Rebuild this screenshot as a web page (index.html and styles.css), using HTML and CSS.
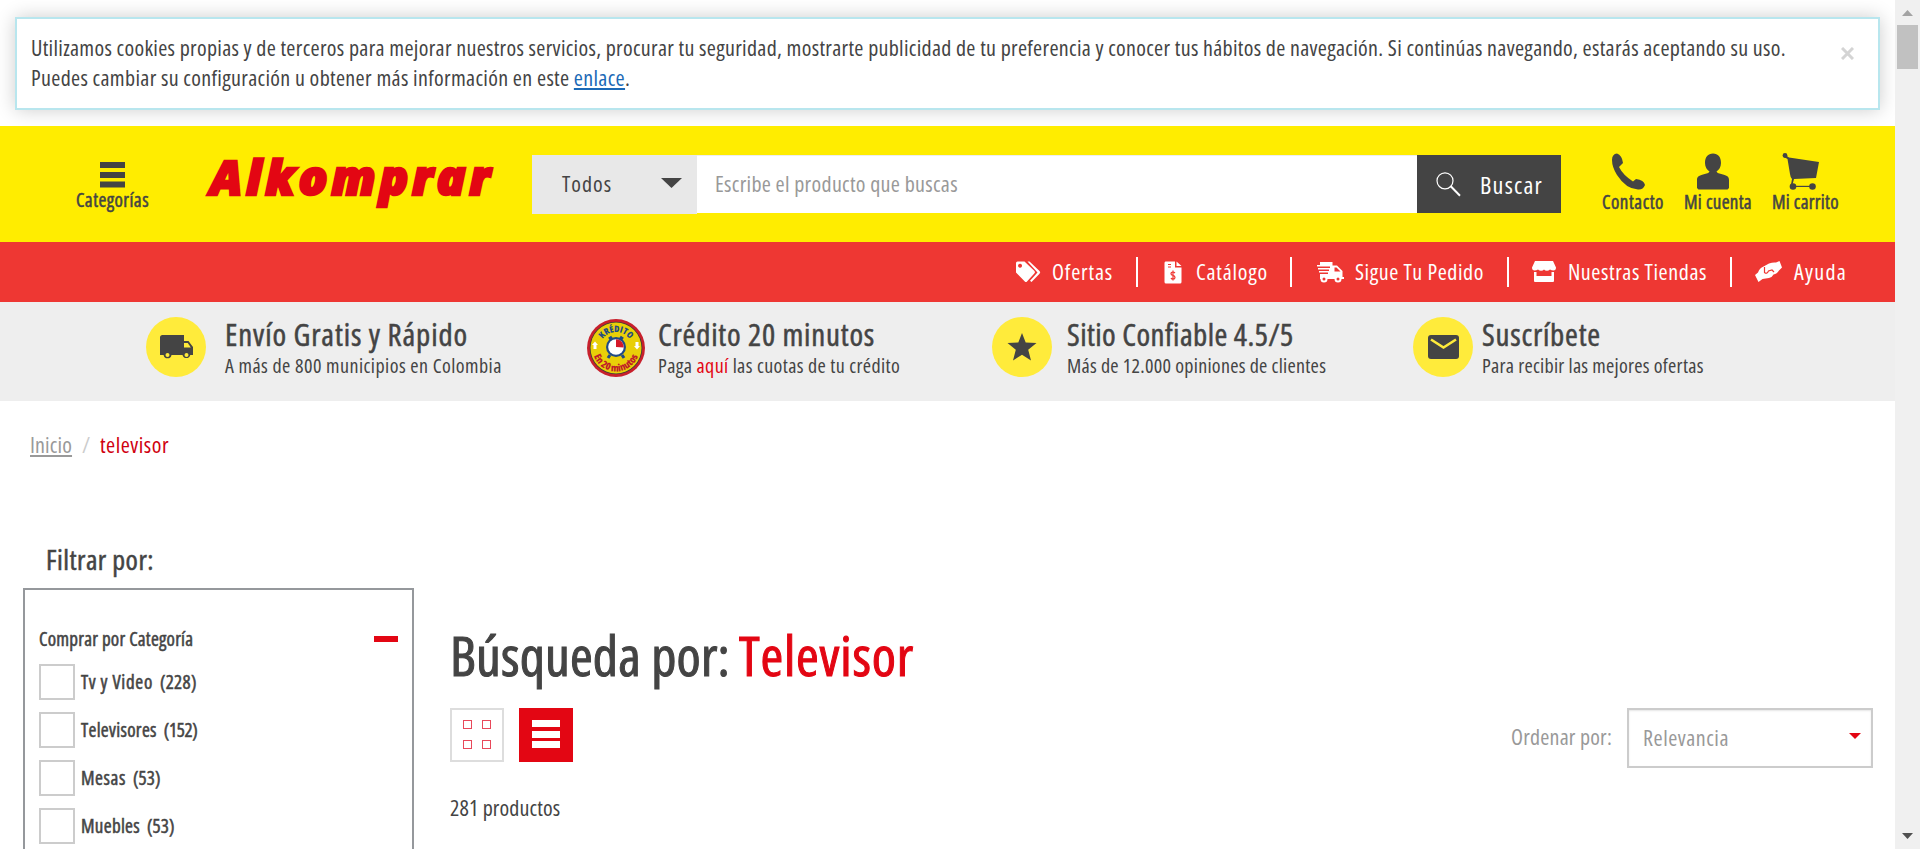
FILE: index.html
```
<!DOCTYPE html>
<html lang="es">
<head>
<meta charset="utf-8">
<title>televisor | Alkomprar</title>
<link rel="stylesheet" href="styles.css">
</head>
<body>
<div class="page">
  <section class="cookie-wrap">
    <div class="cookie">
      <p class="cookie-text"><span class="t ck1">Utilizamos cookies propias y de terceros para mejorar nuestros servicios, procurar tu seguridad, mostrarte publicidad de tu preferencia y conocer tus hábitos de navegación. Si continúas navegando, estarás aceptando su uso.</span><br><span class="t ck2">Puedes cambiar su configuración u obtener más información en este <a href="#">enlace</a>.</span></p>
      <svg class="close" viewBox="0 0 13 13"><path d="M1 1l11 11M12 1L1 12"/></svg>
    </div>
  </section>

  <header class="header">
    <a class="cats">
      <svg viewBox="0 0 25 26"><path d="M0 0h25v6H0zM0 10h25v6H0zM0 19.500h25v6H0z"/></svg>
      <span class="t cats-label">Categorías</span>
    </a>
    <a class="logo"><span class="t logo-text">Alkomprar</span></a>
    <form class="search">
      <div class="scope"><span class="t s-todos">Todos</span><svg viewBox="0 0 21 10"><path d="M0 0h21L10.500 10z"/></svg></div>
      <div class="query"><span class="t s-ph">Escribe el producto que buscas</span></div>
      <div class="submit">
        <svg viewBox="0 0 25 25"><circle cx="9" cy="8.800" r="8"/><path d="M14.500 14l9.500 9.800" stroke-width="2"/></svg>
        <span class="t s-btn">Buscar</span>
      </div>
    </form>
    <nav class="account">
      <a><svg width="34" height="37" viewBox="0 0 34 37"><path d="M1 7Q1 1 6 .5Q11 2 12 10L8 14Q12 22 22 28.500L25 26Q33 27 34 32Q32 37 27 36.500Q15 36 6 22Q1 14 1 7Z"/></svg><span class="t acc1">Contacto</span></a>
      <a><svg width="34" height="37" viewBox="0 0 34 37"><path d="M17 .5C22 .5 25 4 25 10C25 14 23 17 20.500 18.500C21 20 23 20.500 27 21.500C31.500 22.800 33 24 33 27V35L31.500 36.500H2.500L1 35V27C1 24 2.500 22.800 7 21.500C11 20.500 13 20 13.500 18.500C11 17 9 14 9 10C9 4 12 .5 17 .5Z"/></svg><span class="t acc2">Mi cuenta</span></a>
      <a><svg width="38" height="37" viewBox="0 0 38 37"><circle cx="3" cy="2.500" r="2.400"/><path d="M2 1L7 4.500L37 9L34 25L12 26L10.500 31.500H9L10 26Q8.500 25 8 21L5.500 6L1 3.500Z"/><circle cx="11" cy="33.500" r="3.300"/><circle cx="30.500" cy="33.500" r="3.300"/><path d="M11 32.800h19v1.200H11z"/></svg><span class="t acc3">Mi carrito</span></a>
    </nav>
  </header>

  <nav class="menu">
    <a class="m1"><svg width="25" height="22" viewBox="0 0 25 22"><path fill-rule="evenodd" d="M0 2Q0 .5 1.500 .5H8.500L18.500 10Q19.500 11.200 18.500 12.300L11 20.500Q10 21.500 8.800 20.500L0 11.500ZM4 2.800a2 2 0 1 0 .1 0Z"/><path d="M11.500 .5H13.500L23.500 10Q25 11.300 23.500 12.800L15.500 21L14 19.700L21.500 11.400Z"/></svg><span class="t mt1">Ofertas</span></a>
    <a class="m2"><svg width="18" height="23" viewBox="0 0 18 23"><path d="M1.500 .5H11V6.500H17.500V21Q17.500 22.500 16 22.500H2Q.5 22.500 .5 21V2Q.5 .5 1.500 .5ZM12.500 .5L17.500 5H12.500Z"/><path class="ink" d="M4 3.500h3M4 6h3M11 12Q10 11 9 11Q7 11 7 12.700Q7 14 9 14.400Q11 15 11 16.500Q11 18.200 9 18.200Q7.500 18.200 7 17M9 9.500v10"/></svg><span class="t mt2">Catálogo</span></a>
    <a class="m3"><svg width="27" height="22" viewBox="0 0 27 22"><path d="M3 1H15.500V4.500H20L25.500 10V16H27V18H24.500A3.500 3.500 0 0 1 17.500 18H10.500A3.500 3.500 0 0 1 3.500 18H3V13H11V11.500H2V10H12V8.500H1V7H13V5.500H0V4H3Z"/><path class="hole" d="M17.500 6.500h2l4 4h-6z"/><circle class="hole" cx="7" cy="18" r="1.500"/><circle class="hole" cx="21" cy="18" r="1.500"/></svg><span class="t mt3">Sigue Tu Pedido</span></a>
    <a class="m4"><svg width="24" height="21" viewBox="0 0 24 21"><path d="M3 0H21L24 6.500Q24 9.500 21.500 9.500Q19.500 9.500 18 8.500Q16.500 9.800 15 9.800Q13 9.800 12 8.500Q11 9.800 9 9.800Q7.500 9.800 6 8.500Q4.500 9.500 2.500 9.500Q0 9.500 0 6.500Z"/><path d="M2 11H4.500V15H19.500V11H22V20Q22 21 21 21H3Q2 21 2 20Z"/></svg><span class="t mt4">Nuestras Tiendas</span></a>
    <a class="m5"><svg width="27" height="21" viewBox="0 0 27 21"><path d="M21 1.500L24.500 0L27 6.500L24 9.500Q22 13 18.500 13.500Q17 16.500 14 17L7.500 18L3.500 21L0 14L3 11.500Q4.500 7 8.500 5.500L14 2.500Q18 1 21 1.500Z"/><path class="ink" d="M9.500 6v5.500Q12 13.500 13.500 10L17 9L19 11"/></svg><span class="t mt5">Ayuda</span></a>
  </nav>

  <section class="benefits">
    <div class="benefit b1">
      <svg width="60" height="60" viewBox="0 0 60 60"><circle class="disc" cx="30" cy="30" r="30"/><path class="dark" d="M16.500 18H38V24H42.500L47 30V38H44.300A4 4 0 0 1 36.500 38H25.500A4 4 0 0 1 17.600 38H14V20.500Q14 18 16.500 18Z"/><path class="disc" d="M38 26h3.800l3 4.500H38z"/><circle class="disc" cx="21.500" cy="38" r="2"/><circle class="disc" cx="40.500" cy="38" r="2"/></svg>
      <div><h3><span class="t bt1">Envío Gratis y Rápido</span></h3><p><span class="t bs1">A más de 800 municipios en Colombia</span></p></div>
    </div>
    <div class="benefit b2">
      <svg width="60" height="60" viewBox="0 0 60 60">
        <defs><path id="arcTop" d="M14 31A16 16 0 0 1 46 31"/><path id="arcBottom" d="M6.500 31A23.500 23.500 0 0 0 53.500 31"/></defs>
        <circle cx="30" cy="31" r="29" fill="#c8202c"/><circle cx="30" cy="31" r="26.300" fill="#3a3d38"/><circle cx="30" cy="31" r="25.500" fill="#e9cf08"/>
        <text class="k-top"><textPath href="#arcTop" startOffset="50%" text-anchor="middle">KRÉDITO</textPath></text>
        <text class="k-bottom"><textPath href="#arcBottom" startOffset="50%" text-anchor="middle">En 20 minutos</textPath></text>
        <path d="M23 22l3-2M37 22l-3-2M24 38l-2 3M36 38l2 3" stroke="#1f4a86" stroke-width="3"/>
        <circle cx="30" cy="30" r="10" fill="#1f4a86"/><circle cx="30" cy="30" r="7.800" fill="#fff"/><path d="M30 30V22.200A7.800 7.800 0 0 1 37.800 30.500Z" fill="#d4182a"/>
        <path d="M9 24.500l3 3.500h-1.500v4h-3v-4H6zM51 32.500l3-3.500h-1.500v-4h-3v4H48z" fill="#fff"/>
      </svg>
      <div><h3><span class="t bt2">Crédito 20 minutos</span></h3><p><span class="t bs2">Paga <a>aquí</a> las cuotas de tu crédito</span></p></div>
    </div>
    <div class="benefit b3">
      <svg width="60" height="60" viewBox="0 0 60 60"><circle class="disc" cx="30" cy="30" r="30"/><path class="dark" d="M30 16L33.700 25.500L44.500 26L36.200 32.800L39 43.500L30 37.800L21 43.500L23.800 32.800L15.500 26L26.300 25.500Z"/></svg>
      <div><h3><span class="t bt3">Sitio Confiable 4.5/5</span></h3><p><span class="t bs3">Más de 12.000 opiniones de clientes</span></p></div>
    </div>
    <div class="benefit b4">
      <svg width="60" height="60" viewBox="0 0 60 60"><circle class="disc" cx="30" cy="30" r="30"/><rect class="dark" x="15" y="18" width="31" height="24" rx="3"/><path class="flap" d="M18 22.500l12.500 8L43 22.500"/></svg>
      <div><h3><span class="t bt4">Suscríbete</span></h3><p><span class="t bs4">Para recibir las mejores ofertas</span></p></div>
    </div>
  </section>

  <nav class="crumbs"><a class="t cr1">Inicio</a><span class="sep">/</span><span class="t cr2">televisor</span></nav>

  <main class="main">
    <aside class="side">
      <h2><span class="t fil">Filtrar por:</span></h2>
      <div class="panel">
        <div class="panel-head"><span class="t ph">Comprar por Categoría</span><i class="minus"></i></div>
        <ul class="facets">
          <li><i class="box"></i><span class="t f1">Tv y Video</span><span class="t n1">(228)</span></li>
          <li><i class="box"></i><span class="t f2">Televisores</span><span class="t n2">(152)</span></li>
          <li><i class="box"></i><span class="t f3">Mesas</span><span class="t n3">(53)</span></li>
          <li><i class="box"></i><span class="t f4">Muebles</span><span class="t n3">(53)</span></li>
        </ul>
      </div>
    </aside>
    <section class="results">
      <h1><span class="t h1a">Búsqueda por:</span><span class="t h1b">Televisor</span></h1>
      <div class="tools">
        <a class="view grid"><i></i><i></i><i></i><i></i></a>
        <a class="view list"><i></i><i></i><i></i></a>
        <span class="sort-label"><span class="t ord">Ordenar por:</span></span>
        <div class="sort"><span class="t rel">Relevancia</span><svg viewBox="0 0 12 6"><path d="M0 0h12L6 6z"/></svg></div>
      </div>
      <p class="count"><span class="t cnt">281 productos</span></p>
    </section>
  </main>
</div>
<div class="scrollbar"><svg class="up" viewBox="0 0 11 6"><path d="M0 6h11L5.500 0z"/></svg><div class="thumb"></div><svg class="down" viewBox="0 0 11 6"><path d="M0 0h11L5.500 6z"/></svg></div>
</body>
</html>
```
FILE: styles.css
```
* { box-sizing: border-box; }
body {
  margin: 0;
  display: flex;
  height: 849px;
  overflow: hidden;
  background: #fff;
  color: #444;
  font: 400 22px/30px "Open Sans", sans-serif;
  font-stretch: 75%;
}
h1, h2, h3, p, ul { margin: 0; padding: 0; font-weight: 400; list-style: none; }
svg { display: block; flex: none; }
.page { width: 1895px; height: 849px; overflow: hidden; flex: none; }
.t { white-space: nowrap; flex: none; display: inline-block; }
h1, h2, h3, .cats, .account, .panel { -webkit-text-stroke: .5px currentColor; }
h1 { -webkit-text-stroke-width: 1px; }

/* Tracking */
.ck1 { letter-spacing: .307px; }
.ck2 { letter-spacing: .33px; }
.cats-label { letter-spacing: .46px; }
.logo-text { letter-spacing: 3.61px; }
.s-todos { letter-spacing: .98px; }
.s-ph { letter-spacing: .31px; }
.s-btn { letter-spacing: 1.25px; }
.acc1 { letter-spacing: .54px; }
.acc2, .acc3 { letter-spacing: .32px; }
.mt1 { letter-spacing: .83px; }
.mt2 { letter-spacing: .78px; }
.mt3 { letter-spacing: .56px; }
.mt4 { letter-spacing: .58px; }
.mt5 { letter-spacing: 1.25px; }
.bt1 { letter-spacing: .86px; }
.bt2, .bt4 { letter-spacing: .78px; }
.bt3 { letter-spacing: .42px; }
.bs1 { letter-spacing: .46px; }
.bs2 { letter-spacing: .38px; }
.bs3, .bs4 { letter-spacing: .26px; }
.cr1 { letter-spacing: .14px; }
.cr2 { letter-spacing: .5px; }
.fil { letter-spacing: .46px; }
.ph { letter-spacing: .24px; }
.f1 { letter-spacing: .69px; }
.f2, .f4 { letter-spacing: .32px; }
.f3 { letter-spacing: .61px; }
.n1 { letter-spacing: .3px; }
.n2 { letter-spacing: -.34px; }
.n3 { letter-spacing: .15px; }
.h1a { letter-spacing: .15px; }
.h1b { letter-spacing: .78px; }
.ord { letter-spacing: .2px; }
.rel { letter-spacing: .52px; }
.cnt { letter-spacing: .12px; }

/* Cookie notice */
.cookie-wrap { height: 126px; padding: 17px 15px 0; }
.cookie {
  display: flex;
  justify-content: space-between;
  height: 93px;
  padding: 13px 24px 0 14px;
  border: 2px solid #b8e6ee;
  background: #fff;
  box-shadow: 0 0 18px rgba(0, 0, 0, .2);
}
.cookie-text { width: 1757px; }
.cookie-text .t { vertical-align: top; }
.cookie-text a { color: #1b69b6; text-decoration: underline; text-decoration-thickness: 2px; text-underline-offset: 2px; }
.close { width: 13px; height: 13px; margin-top: 15px; fill: none; stroke: #d4d4d4; stroke-width: 3; }

/* Header */
.header { display: flex; height: 116px; background: #ffed00; }
.cats { display: flex; flex-direction: column; align-items: center; width: 73px; margin-left: 76px; padding-top: 36px; font-size: 19px; line-height: 24px; }
.cats svg { width: 25px; height: 26px; fill: #444; }
.logo { width: 284px; margin-left: 61px; padding-top: 21px; color: #e30613; font: italic 800 48px/60px "Open Sans", sans-serif; -webkit-text-stroke: 2.5px currentColor; }
.search { display: flex; margin: 29px 0 0 38px; }
.scope { display: flex; align-items: center; justify-content: space-between; width: 165px; height: 59px; padding: 0 15px 4px 30px; background: #e8e8e8; }
.scope svg { width: 21px; height: 10px; fill: #444; }
.query { display: flex; align-items: center; width: 720px; height: 58px; padding: 0 0 3px 18px; background: #fff; color: #999; border-top: 1px solid #eee; }
.submit { display: flex; width: 144px; height: 58px; padding: 17px 0 0 19px; background: #444; color: #fff; font-size: 24px; line-height: 28px; }
.submit svg { width: 25px; height: 25px; fill: none; stroke: #fff; stroke-width: 1.2; margin-right: 19px; }
.submit .t { margin-top: -1px; }
.account { display: flex; margin-left: 41px; padding-top: 27px; font-size: 19px; line-height: 24px; }
.account a { display: flex; flex-direction: column; align-items: center; margin-right: 20px; }
.account svg { fill: #444; margin-right: 9px; }

/* Category links */
.menu { display: flex; justify-content: flex-end; height: 60px; padding: 15px 48px 15px 0; background: #ee3733; color: #fff; line-height: 28px; }
.menu a { display: flex; height: 30px; padding: 0 23px; border-left: 2px solid #fff; }
.menu a:first-child { border-left: 0; }
.menu a:last-child { padding-right: 0; }
.menu svg { margin: 4px 11px 0 0; fill: #fff; }
.menu .m2 { padding: 0 22px 0 26px; }
.menu .m2 svg { margin-right: 14px; }
.menu .m3 { padding-left: 25px; }
.menu .m4 svg, .menu .m5 svg { margin-right: 12px; }
.menu .ink { fill: none; stroke: #ee3733; stroke-width: 1.2; }
.menu .hole { fill: #ee3733; }

/* Benefits */
.benefits { display: flex; height: 99px; padding: 15px 0 0 146px; background: #eee; }
.benefit { display: flex; }
.benefit h3 { height: 37px; font-size: 31px; line-height: 35px; }
.benefit p { height: 28px; font-size: 20px; line-height: 24px; }
.benefit a { color: #e30613; }
.benefit svg { margin-right: 19px; }
.b1 { width: 440px; }
.b2 { width: 406px; }
.b3 { width: 421px; }
.b2 svg { margin-right: 12px; }
.b3 svg { margin-right: 15px; }
.b4 svg { margin-right: 9px; }
.disc { fill: #ffeb3b; }
.dark { fill: #444; }
.flap { fill: none; stroke: #ffeb3b; stroke-width: 2.6; }
.k-top, .k-bottom { font-family: "Open Sans", sans-serif; font-stretch: 75%; font-weight: 800; font-size: 9px; }
.k-top { fill: #1f4a86; }
.k-bottom { fill: #c01c28; font-size: 10px; }

/* Breadcrumbs */
.crumbs { display: flex; height: 31px; margin: 28px 0 0 30px; color: #999; }
.crumbs a { text-decoration: underline; text-decoration-thickness: 2px; text-underline-offset: 2px; }
.crumbs .sep { width: 28px; text-align: center; color: #ccc; }
.cr2 { color: #d0000f; }

/* Main */
.main { display: flex; }
.side { width: 391px; margin: 80px 36px 0 23px; }
.side h2 { height: 48px; padding-left: 23px; font-size: 28px; line-height: 38px; }
.panel { height: 300px; padding: 42px 14px 0; border: 2px solid #95989c; font-size: 19px; }
.panel-head { display: flex; justify-content: space-between; height: 32px; }
.panel-head .t { margin-top: -9px; line-height: 32px; }
.minus { width: 24px; height: 6px; background: #e30613; margin-top: 4px; }
.facets li { display: flex; align-items: center; height: 36px; margin-bottom: 12px; }
.box { width: 36px; height: 36px; border: 2px solid #ccc; margin-right: 6px; }
.facets .t { margin-right: 7px; }
.results { width: 1423px; padding-top: 156px; }
.results h1 { display: flex; height: 92px; font-size: 55px; line-height: 78px; }
.h1a { margin-right: 9px; }
.h1b { color: #e30613; }
.tools { display: flex; }
.view { width: 54px; height: 54px; margin-right: 15px; }
.grid { display: grid; grid-template-columns: 9px 9px; gap: 10px; padding: 10px 11px; border: 2px solid #ddd; }
.grid i { height: 9px; border: 1px solid #e8485a; }
.list { padding: 12px 13px; background: #e30613; }
.list i { display: block; height: 7px; margin-bottom: 3.5px; background: #fff; }
.sort-label { margin-left: auto; margin-right: 15px; padding-top: 13px; color: #999; }
.sort { display: flex; justify-content: space-between; width: 246px; height: 60px; padding: 12px 10px 0 14px; border: 2px solid #ccc; box-shadow: inset 0 1px 2px rgba(0, 0, 0, .1); color: #999; }
.sort svg { width: 12px; height: 6px; fill: #e30613; margin-top: 11px; }
.count { padding-top: 24px; }

/* Scrollbar */
.scrollbar { display: flex; flex-direction: column; align-items: center; width: 25px; height: 849px; padding: 10px 0; background: #f0f0f0; }
.scrollbar svg { width: 11px; height: 6px; }
.up { fill: #a3a3a3; }
.down { fill: #505050; margin-top: auto; }
.thumb { width: 21px; height: 44px; margin-top: 9px; background: #c1c1c1; }
```
